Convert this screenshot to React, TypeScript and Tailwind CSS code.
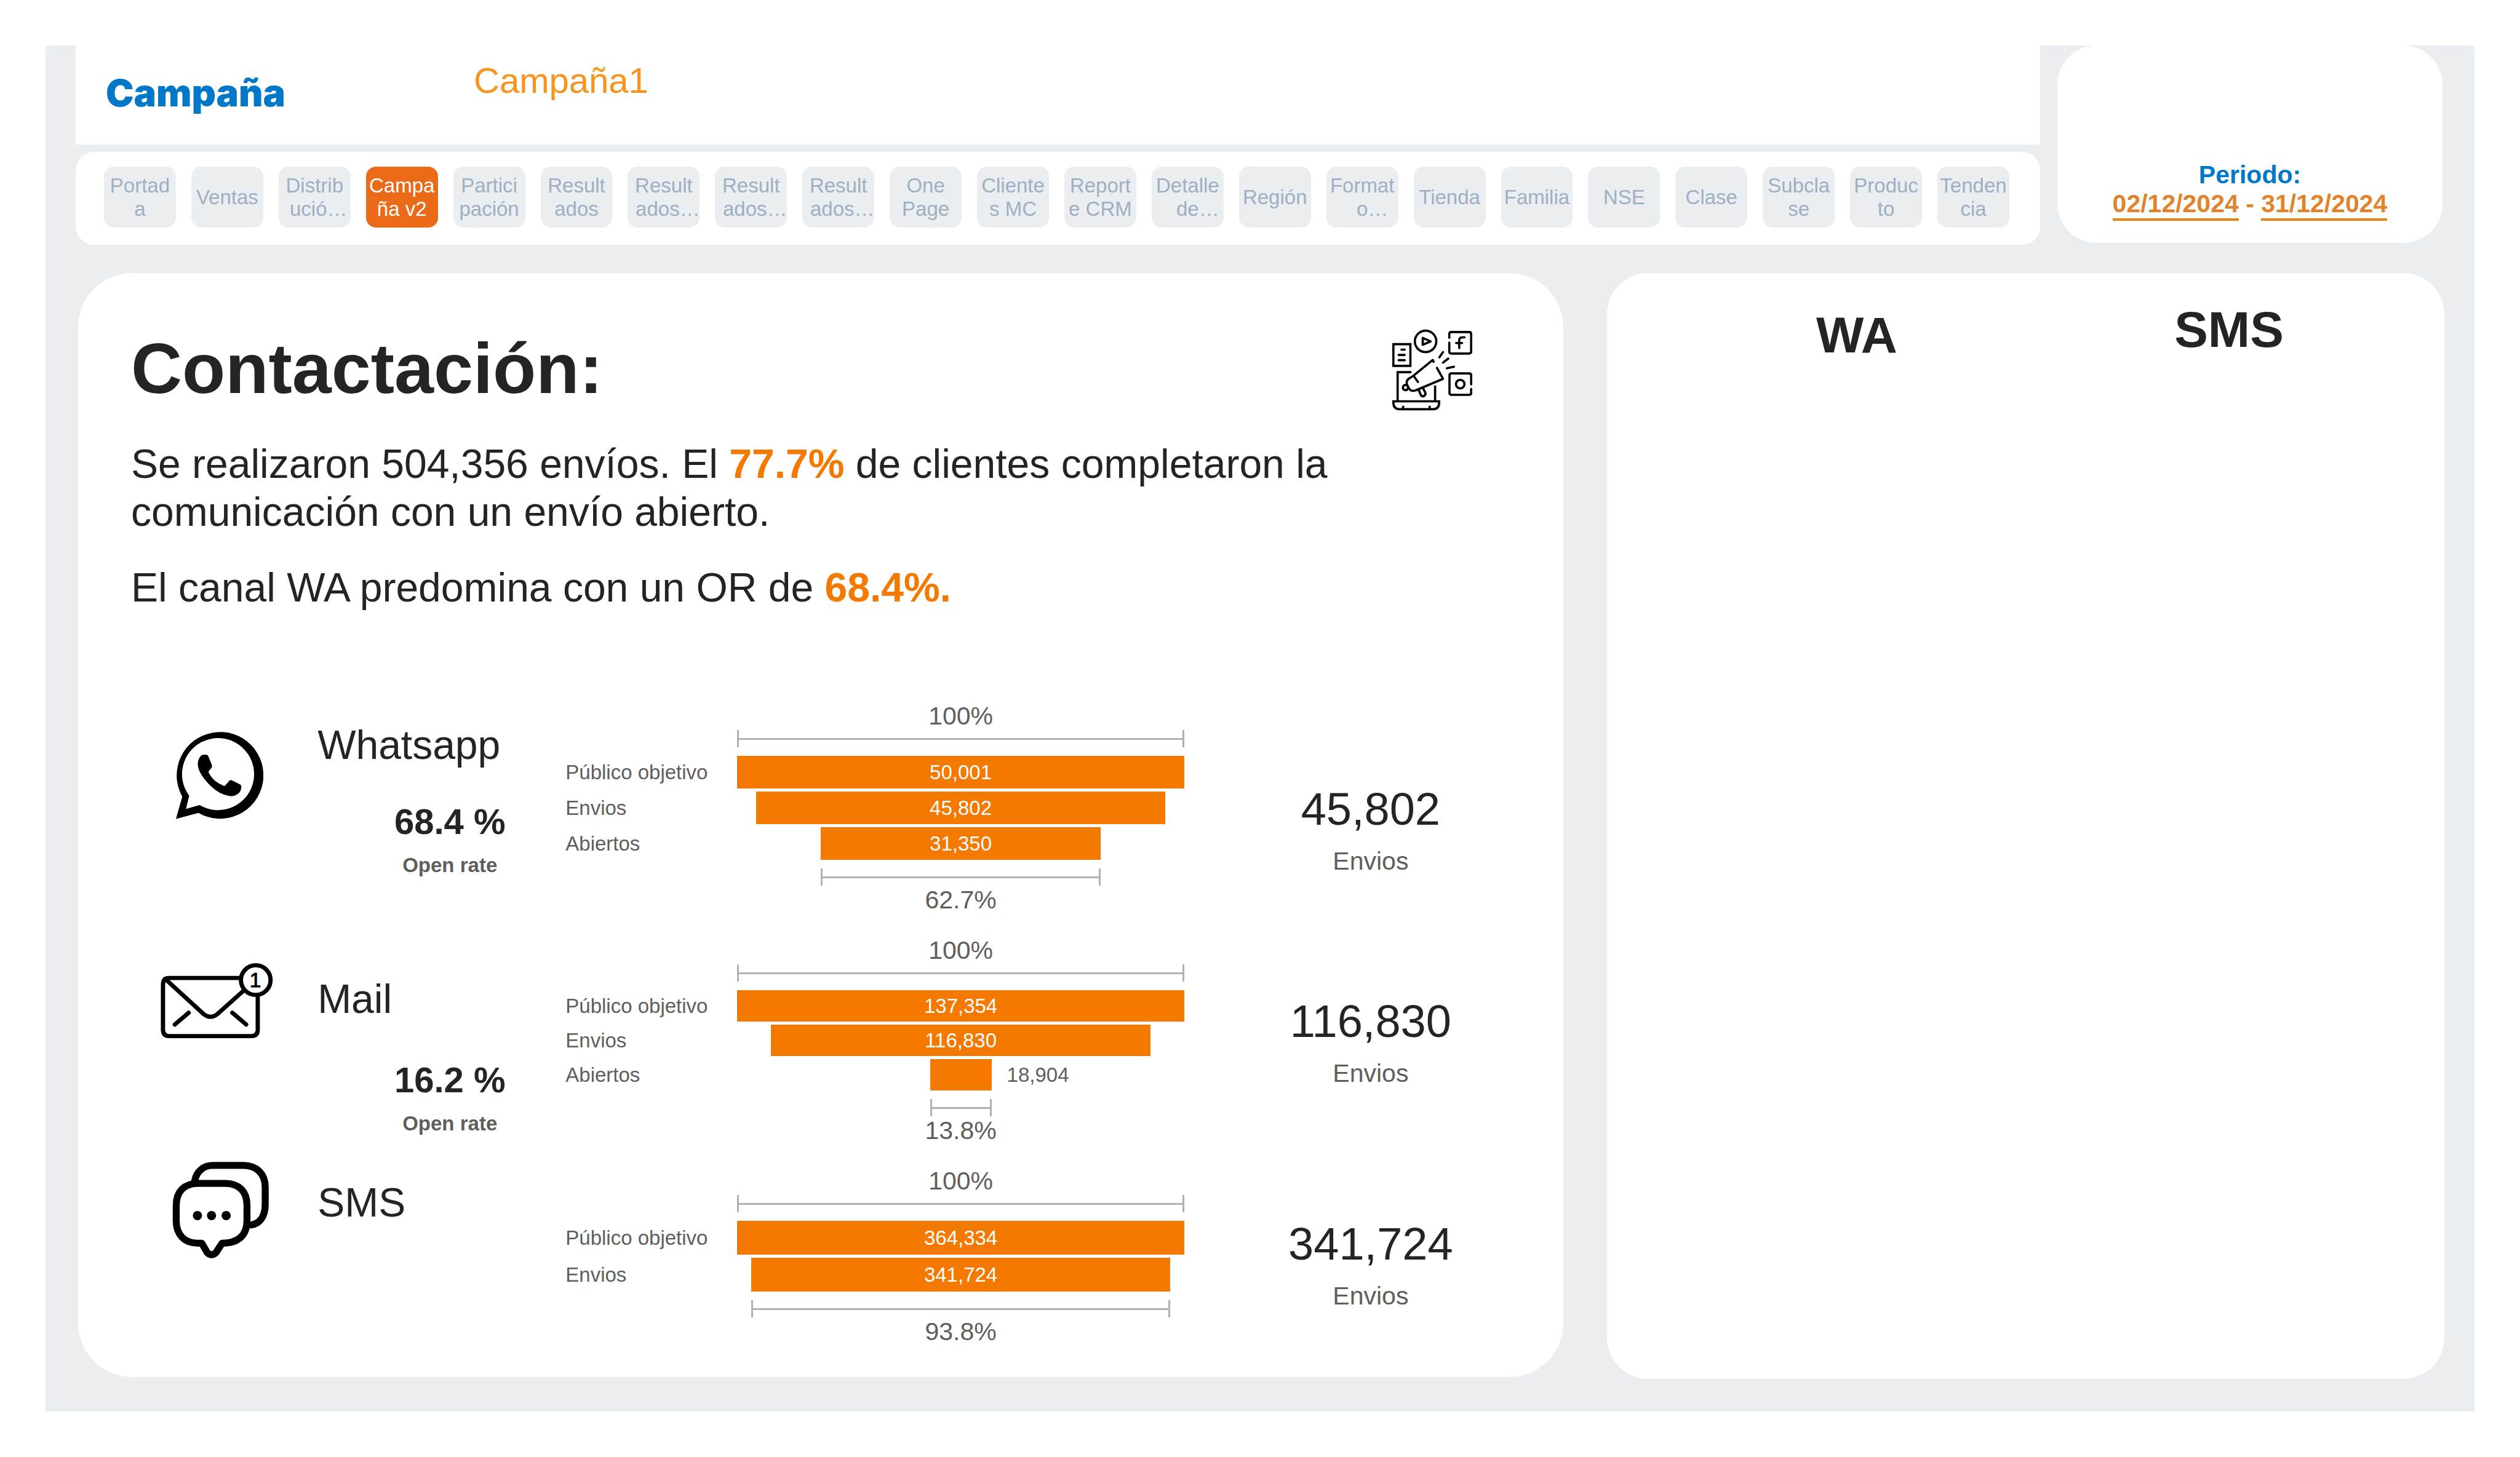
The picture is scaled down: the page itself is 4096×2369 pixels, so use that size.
import type { ReactNode } from "react";

const tabs: { lines: string[]; ellipsis?: "loose" | "tight"; active?: boolean }[] = [
  { lines: ["Portad", "a"] },
  { lines: ["Ventas"] },
  { lines: ["Distrib", "ució"], ellipsis: "tight" },
  { lines: ["Campa", "ña v2"], active: true },
  { lines: ["Partici", "pación"] },
  { lines: ["Result", "ados"] },
  { lines: ["Result", "ados"], ellipsis: "tight" },
  { lines: ["Result", "ados"], ellipsis: "tight" },
  { lines: ["Result", "ados"], ellipsis: "tight" },
  { lines: ["One", "Page"] },
  { lines: ["Cliente", "s MC"] },
  { lines: ["Report", "e CRM"] },
  { lines: ["Detalle", "de"], ellipsis: "loose" },
  { lines: ["Región"] },
  { lines: ["Format", "o"], ellipsis: "loose" },
  { lines: ["Tienda"] },
  { lines: ["Familia"] },
  { lines: ["NSE"] },
  { lines: ["Clase"] },
  { lines: ["Subcla", "se"] },
  { lines: ["Produc", "to"] },
  { lines: ["Tenden", "cia"] },
];

function Tab({ lines, ellipsis, active }: (typeof tabs)[number]) {
  return (
    <button
      type="button"
      aria-current={active ? "page" : undefined}
      className={
        active
          ? "flex min-w-0 flex-1 basis-0 flex-col items-center justify-center rounded-2xl bg-[#eb6a17] text-[33px] leading-[38px] whitespace-nowrap text-white"
          : "flex min-w-0 flex-1 basis-0 flex-col items-center justify-center rounded-2xl bg-[#eaeef1] text-[33px] leading-[38px] whitespace-nowrap text-[#9fafc1]"
      }
    >
      {lines.map((line, i) => (
        <span key={i} className="flex">
          {line}
          {ellipsis && i === lines.length - 1 && (
            <span className={ellipsis === "tight" ? "w-5" : "w-0"}>…</span>
          )}
        </span>
      ))}
    </button>
  );
}

function SocialMediaIcon() {
  return (
    <svg
      viewBox="157 121 394 410"
      className="h-[135px] w-[130px] shrink-0"
      fill="none"
      stroke="#000"
      strokeWidth="11"
      aria-hidden="true"
    >
      <path d="M162 202H246V309H162Z" />
      <path d="M202 229H218M188 255H218M188 281H218" strokeLinecap="round" />
      <circle cx="321" cy="188" r="53" />
      <path d="M307 171V205L346 188Z" strokeLinejoin="round" />
      <path
        d="M438 170V152Q438 142 448 142H536Q546 142 546 152V238Q546 248 536 248H448Q438 248 438 238V194"
        strokeLinecap="round"
      />
      <path d="M487 221V184Q487 168 502 168H513M472 196H501" strokeLinecap="round" />
      <path
        d="M546 400V356Q546 346 536 346H449Q439 346 439 356V442Q439 452 449 452H536Q546 452 546 442V423"
        strokeLinecap="round"
      />
      <circle cx="492" cy="399" r="21" />
      <path d="M389 267L407 241M407 293L433 273M426 321L461 313" strokeLinecap="round" />
      <path d="M251 340H183V482M368 406V482" />
      <path d="M162 484H388V490Q388 523 357 523H193Q162 523 162 490Z" />
      <path d="M210 506V520M341 506V520" />
      <path
        d="M363 293L356 280L262 357L237 373Q225 382 229 400Q236 420 247 429Q256 435 272 430L407 373L375 315M264 361L286 392"
        strokeLinejoin="round"
      />
      <circle cx="222" cy="416" r="13" />
      <path d="M287 427L297 452Q303 462 313 458Q323 452 320 441L307 417" strokeLinejoin="round" />
    </svg>
  );
}

function WhatsappIcon() {
  return (
    <svg viewBox="49 55 144 145" className="h-[143px] w-[142px]" aria-hidden="true">
      <path
        fillRule="evenodd"
        d="M49 199.5L59.4 162.7A71.5 71.5 0 1 1 86 189.6ZM65.5 183L88 176.7A59.4 59.4 0 1 0 70.8 161.2Z"
      />
      <path d="M91 94.5Q93.500 93.500 98 93.500Q101.500 93.500 102.500 96.500L108.200 110.500Q109 113 107.500 115.500L103.300 120.300Q102.300 121.800 103.300 123.600Q111 138.500 127.500 144.800Q129.300 145.400 130.600 143.900L137.300 136.300Q138.700 134.800 141 135.800L154.500 142.500Q157 144 156.800 146.500Q156.500 155 150 159Q144 163 137 161.800Q121 159.500 106 145Q90 129 86 116Q82.500 103 91 94.500Z" />
    </svg>
  );
}

function MailIcon() {
  return (
    <svg
      viewBox="25 36 185 126"
      className="h-[124px] w-[183px]"
      fill="none"
      stroke="#000"
      strokeWidth="7"
      strokeLinecap="round"
      strokeLinejoin="round"
      aria-hidden="true"
    >
      <path d="M155 61.500H39Q28.500 61.500 28.500 72V147Q28.500 157.500 39 157.500H174.500Q185 157.500 185 147V91" />
      <path d="M32 63L96 121.500Q107 130 118 121.500L160 84" />
      <path d="M71 119L48 138.500M143 119L166 138.500" />
      <circle cx="181.700" cy="65" r="24.500" fill="#fff" />
      <text
        x="181"
        y="77"
        fill="#000"
        stroke="#000"
        strokeWidth="1"
        fontSize="34"
        textAnchor="middle"
        fontFamily="'Liberation Sans', sans-serif"
      >
        1
      </text>
    </svg>
  );
}

function SmsIcon() {
  return (
    <svg
      viewBox="43 364 160 159"
      className="h-[157px] w-[158px]"
      fill="none"
      stroke="#000"
      strokeWidth="11.500"
      strokeLinecap="round"
      strokeLinejoin="round"
      aria-hidden="true"
    >
      <path d="M80 395C83 380 94 370 110 370H160C182 370 196 384 196 406V434C196 453 188 466 173 468" />
      <path d="M85 399.500H130C153 399.500 166 413 166 436V461C166 484 153 498 125 498L115 513.500Q107.500 520.500 100.500 513.500L91.500 498H85C63 498 49.500 484 49.500 461V436C49.500 413 63 399.500 85 399.500Z" />
      <g fill="#000" stroke="none">
        <circle cx="84.400" cy="452.500" r="7.600" />
        <circle cx="107.600" cy="452.500" r="7.600" />
        <circle cx="131.700" cy="452.500" r="7.600" />
      </g>
    </svg>
  );
}

function Bracket({ percent }: { percent: number }) {
  return (
    <div
      className="flex h-7 items-center border-x-[3px] border-[#b3b0ad]"
      style={{ width: `${percent}%` }}
    >
      <div className="h-[3px] w-full bg-[#b3b0ad]" />
    </div>
  );
}

type Step = { label: string; value: number };

function Funnel({ steps, barClass }: { steps: Step[]; barClass: string }) {
  const max = steps[0].value;
  const last = (steps[steps.length - 1].value / max) * 100;
  return (
    <div className="text-[33px] leading-[38px] text-[#605e5c]">
      <div className="grid grid-cols-[281fr_726fr]">
        <div className="col-start-2 flex flex-col items-center">
          <span className="text-[41px] leading-[46px]">100%</span>
          <Bracket percent={100} />
        </div>
      </div>
      <div className="my-3.5 flex flex-col gap-[5px]">
        {steps.map(({ label, value }) => {
          const percent = (value / max) * 100;
          const text = value.toLocaleString("en-US");
          return (
            <div key={label} className="grid grid-cols-[281fr_726fr] items-center">
              <span className="pl-0.5">{label}</span>
              <div className="flex justify-center">
                <div
                  className={`relative flex items-center justify-center bg-[#f37900] text-white ${barClass}`}
                  style={{ width: `${percent}%` }}
                >
                  {percent < 20 ? (
                    <span className="absolute left-full ml-[25px] text-[#605e5c]">{text}</span>
                  ) : (
                    text
                  )}
                </div>
              </div>
            </div>
          );
        })}
      </div>
      <div className="grid grid-cols-[281fr_726fr]">
        <div className="col-start-2 flex flex-col items-center">
          <Bracket percent={last} />
          <span className="text-[41px] leading-[46px]">{last.toFixed(1)}%</span>
        </div>
      </div>
    </div>
  );
}

type ChannelProps = {
  name: string;
  icon: ReactNode;
  rate?: string;
  sent: string;
  steps: Step[];
  barClass: string;
  rowClass: string;
  iconClass: string;
  nameClass: string;
  rateClass?: string;
  funnelClass: string;
  sentClass: string;
};

function Channel(c: ChannelProps) {
  return (
    <section className={`grid grid-cols-[303fr_401fr_1007fr_606fr] items-start ${c.rowClass}`}>
      <div className={`flex justify-center ${c.iconClass}`}>{c.icon}</div>
      <div className={c.nameClass}>
        <h2 className="text-[66px] leading-[76px]">{c.name}</h2>
        {c.rate && (
          <div className={`flex flex-col items-center gap-[19px] pl-[29px] font-bold ${c.rateClass}`}>
            <span className="text-[58px] leading-[66px]">{c.rate}</span>
            <span className="text-[33px] leading-[38px] text-[#605e5c]">Open rate</span>
          </div>
        )}
      </div>
      <div className={c.funnelClass}>
        <Funnel steps={c.steps} barClass={c.barClass} />
      </div>
      <div className={`flex flex-col items-center gap-[18px] ${c.sentClass}`}>
        <span className="text-[74px] leading-[84px]">{c.sent}</span>
        <span className="text-[41px] leading-[48px] text-[#605e5c]">Envios</span>
      </div>
    </section>
  );
}

export default function App() {
  return (
    <div className="flex min-h-screen flex-col bg-white p-[74px] font-['Liberation_Sans',Arial,sans-serif] text-[#252423]">
      <div className="flex flex-1 flex-col bg-[#eaeef1]">
        <div className="flex items-start gap-7 pr-[52px] pl-[49px]">
          <div className="flex min-w-0 flex-1 flex-col gap-3">
            <header className="flex h-[161px] items-start bg-white pl-[49px]">
              <h1 className="w-[598px] pt-11 font-['Arial_Black',Inter,sans-serif] text-[61px] leading-[66px] font-black text-[#0078c9]">
                Campaña
              </h1>
              <p className="pt-6 text-[58px] leading-[66px] text-[#f7941d]">Campaña1</p>
            </header>
            <nav className="flex h-[151px] gap-[25px] rounded-[30px] bg-white pt-6 pr-[50px] pb-7 pl-[46px]">
              {tabs.map((tab, i) => (
                <Tab key={i} {...tab} />
              ))}
            </nav>
          </div>
          <div className="flex h-[321px] w-[626px] flex-col items-center justify-end rounded-[64px] bg-white pb-9 text-[41px] leading-[47px] font-bold">
            <span className="text-[#0078c9]">Periodo:</span>
            <div className="flex items-start whitespace-pre text-[#e1832b]">
              <button type="button" className="border-b-4 border-[#ef8014]">
                02/12/2024
              </button>
              <span> - </span>
              <button type="button" className="border-b-4 border-[#ef8014]">
                31/12/2024
              </button>
            </div>
          </div>
        </div>

        <main className="mt-[46px] grid flex-1 grid-cols-[2414fr_1361fr] gap-x-[71px] pr-[49px] pb-[53px] pl-[53px]">
          <div className="mb-[3px] rounded-[88px] bg-white pt-[89px] pr-2.5 pb-[49px] pl-[86px]">
            <div className="flex items-start justify-between pr-[138px]">
              <h2 className="text-[115px] leading-[132px] font-bold">Contactación:</h2>
              <SocialMediaIcon />
            </div>
            <div className="mt-[47px] pr-[138px] text-[66px] leading-[78px]">
              <p>
                Se realizaron 504,356 envíos. El <b className="text-[#f37900]">77.7%</b> de clientes
                completaron la comunicación con un envío abierto.
              </p>
              <p className="mt-[45px]">
                El canal WA predomina con un OR de <b className="text-[#f37900]">68.4%.</b>
              </p>
            </div>

            <Channel
              name="Whatsapp"
              icon={<WhatsappIcon />}
              rate="68.4 %"
              sent="45,802"
              steps={[
                { label: "Público objetivo", value: 50001 },
                { label: "Envios", value: 45802 },
                { label: "Abiertos", value: 31350 },
              ]}
              barClass="h-[53px]"
              rowClass="mt-[147px]"
              iconClass="pt-12 pr-4"
              nameClass="pt-8"
              rateClass="mt-[54px]"
              funnelClass="pt-0"
              sentClass="pt-[133px]"
            />
            <Channel
              name="Mail"
              icon={<MailIcon />}
              rate="16.2 %"
              sent="116,830"
              steps={[
                { label: "Público objetivo", value: 137354 },
                { label: "Envios", value: 116830 },
                { label: "Abiertos", value: 18904 },
              ]}
              barClass="h-[51px]"
              rowClass="mt-9"
              iconClass="pt-[43px] pr-6"
              nameClass="pt-16"
              rateClass="mt-[61px]"
              funnelClass="pt-0"
              sentClass="pt-[97px]"
            />
            <Channel
              name="SMS"
              icon={<SmsIcon />}
              sent="341,724"
              steps={[
                { label: "Público objetivo", value: 364334 },
                { label: "Envios", value: 341724 },
              ]}
              barClass="h-[55px]"
              rowClass="mt-7"
              iconClass="pt-0 pr-3"
              nameClass="pt-7"
              funnelClass="pt-2"
              sentClass="pt-[92px]"
            />
          </div>

          <div className="grid grid-cols-[812fr_398fr] items-start rounded-[67px] bg-white pr-[151px] text-center text-[82px] leading-[94px] font-bold">
            <h2 className="pt-[54px]">WA</h2>
            <h2 className="pt-[45px]">SMS</h2>
          </div>
        </main>
      </div>
    </div>
  );
}
